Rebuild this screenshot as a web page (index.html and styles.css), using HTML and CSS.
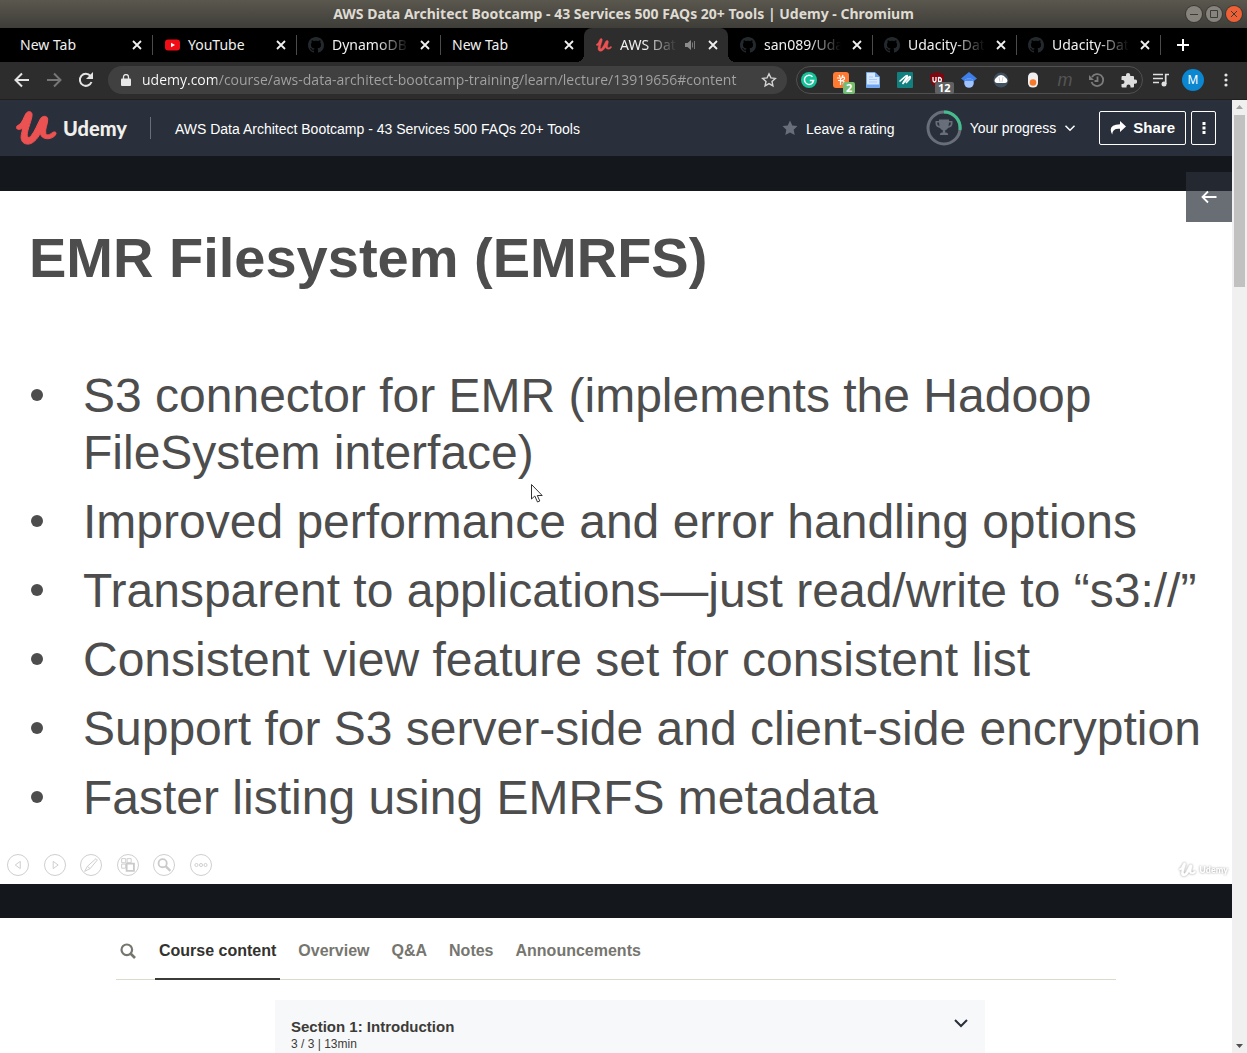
FILE: index.html
```html
<!DOCTYPE html>
<html lang="en">
<head>
<meta charset="utf-8">
<title>AWS Data Architect Bootcamp - 43 Services 500 FAQs 20+ Tools | Udemy</title>
<link rel="stylesheet" href="styles.css">
</head>
<body>
<svg class="defs" aria-hidden="true">
  <symbol id="close" viewBox="0 0 16 16"><path d="M4 4l8 8M12 4l-8 8" stroke="currentColor" stroke-width="1.800" fill="none"/></symbol>
  <symbol id="github" viewBox="0 0 16 16"><path fill="#24292e" d="M8 0C3.580 0 0 3.580 0 8c0 3.540 2.290 6.530 5.470 7.590.4.070.55-.17.55-.38 0-.19-.01-.82-.01-1.490-2.010.37-2.530-.49-2.690-.94-.09-.23-.48-.94-.82-1.130-.28-.15-.68-.52-.01-.53.63-.01 1.080.58 1.230.82.72 1.210 1.870.87 2.330.66.070-.52.28-.87.51-1.070-1.780-.2-3.640-.89-3.640-3.950 0-.87.31-1.590.82-2.150-.08-.2-.36-1.020.08-2.120 0 0 .67-.21 2.200.82.64-.18 1.320-.27 2-.27s1.360.09 2 .27c1.530-1.040 2.200-.82 2.200-.82.44 1.100.16 1.920.08 2.120.51.56.82 1.270.82 2.150 0 3.070-1.870 3.750-3.650 3.950.29.25.54.73.54 1.480 0 1.070-.01 1.930-.01 2.200 0 .21.15.46.55.38A8.010 8.010 0 0016 8c0-4.420-3.580-8-8-8z"/></symbol>
  <symbol id="umark" viewBox="0 0 42 36"><path fill="currentColor" stroke="currentColor" stroke-width="1" d="M.5 17.500C.5 15.500 2 15.500 4 14C6.500 12 8 7 10 3.500C12 0 16.500 .7 16.500 4.500C16.500 9 11.500 20 11.500 25C11.500 28 13.500 28.500 15.500 26C19.500 21 22 14 25 8.500C26.500 5.500 32.500 4.500 32.500 9.500C32.500 14 29.500 19.500 30.500 23.500C31.500 26.500 35 24.500 37.500 22.500C39.500 21.500 41.500 22 41 24C40 27 36 29 32.500 29C28 29 25.500 27 25 23.500C21.500 30 16.500 35 11.500 34.500C6 34 4.500 29.500 5.500 24.500L7 18C5.500 19.500 .5 20.500 .5 17.500Z"/></symbol>
  <symbol id="chevron" viewBox="0 0 16 16"><path d="M2 5l6 6L14 5" fill="none" stroke="currentColor" stroke-width="2"/></symbol>
</svg>

<header class="titlebar">
  <span class="titlebar-text">AWS Data Architect Bootcamp - 43 Services 500 FAQs 20+ Tools | Udemy - Chromium</span>
  <div class="window-buttons">
    <button class="wbtn" aria-label="Minimize"><svg viewBox="0 0 16 16"><path d="M4 8.500h8"/></svg></button>
    <button class="wbtn" aria-label="Maximize"><svg viewBox="0 0 16 16"><path d="M4.500 4.500h7v7h-7z"/></svg></button>
    <button class="wbtn wbtn-close" aria-label="Close window"><svg viewBox="0 0 16 16"><path d="M5 5l6 6M11 5l-6 6"/></svg></button>
  </div>
</header>

<nav class="tabstrip" aria-label="Browser tabs">
  <div class="tab"><span class="tab-label">New Tab</span><button aria-label="Close tab"><svg><use href="#close"/></svg></button></div>
  <div class="tab"><svg class="favicon" viewBox="0 0 16 16"><rect x="1" y="2.500" width="15" height="11" rx="3" fill="#f00d16"/><path d="M7 5.700L11 8l-4 2.300z" fill="#fff"/></svg><span class="tab-label">YouTube</span><button aria-label="Close tab"><svg><use href="#close"/></svg></button></div>
  <div class="tab"><svg class="favicon"><use href="#github"/></svg><span class="tab-label faded">DynamoDB</span><button aria-label="Close tab"><svg><use href="#close"/></svg></button></div>
  <div class="tab no-rule"><span class="tab-label">New Tab</span><button aria-label="Close tab"><svg><use href="#close"/></svg></button></div>
  <div class="tab active no-rule"><svg class="favicon red"><use href="#umark"/></svg><span class="tab-label faded">AWS Dat</span><svg class="audio" viewBox="0 0 12 12"><path d="M0 4h2.500L6 1v10L2.500 8H0z" fill="#8b8b8b"/><path d="M7.500 3.500v5M9.500 2v8" stroke="#777" fill="none"/></svg><button aria-label="Close tab"><svg><use href="#close"/></svg></button></div>
  <div class="tab"><svg class="favicon"><use href="#github"/></svg><span class="tab-label faded">san089/Uda</span><button aria-label="Close tab"><svg><use href="#close"/></svg></button></div>
  <div class="tab"><svg class="favicon"><use href="#github"/></svg><span class="tab-label faded">Udacity-Dat</span><button aria-label="Close tab"><svg><use href="#close"/></svg></button></div>
  <div class="tab"><svg class="favicon"><use href="#github"/></svg><span class="tab-label faded">Udacity-Dat</span><button aria-label="Close tab"><svg><use href="#close"/></svg></button></div>
  <button class="new-tab" aria-label="New tab"><svg viewBox="0 0 12 12"><path d="M6 0v12M0 6h12" stroke="#fff" stroke-width="2"/></svg></button>
</nav>

<div class="toolbar">
  <button class="tool" aria-label="Back"><svg viewBox="0 0 16 16"><path d="M15 8H2M8 1.500L1.500 8 8 14.500" fill="none" stroke="#e4e4e4" stroke-width="2"/></svg></button>
  <button class="tool" aria-label="Forward"><svg viewBox="0 0 16 16"><path d="M1 8h13M8 1.500L14.500 8 8 14.500" fill="none" stroke="#767676" stroke-width="2"/></svg></button>
  <button class="tool" aria-label="Reload"><svg viewBox="0 0 16 16"><path d="M13.500 10A6 6 0 1 1 12.500 4" fill="none" stroke="#e4e4e4" stroke-width="2"/><path d="M15 0v7H8z" fill="#e4e4e4"/></svg></button>
  <form class="omnibox">
    <svg class="lock" viewBox="0 0 10 12"><path d="M1 4.500h8q1 0 1 1V11q0 1-1 1H1q-1 0-1-1V5.500q0-1 1-1z" fill="#e8e8e8"/><path d="M2.500 5V3a2.500 2.500 0 0 1 5 0v2" fill="none" stroke="#e8e8e8" stroke-width="1.300"/></svg>
    <input aria-label="Address" value="udemy.com/course/aws-data-architect-bootcamp-training/learn/lecture/13919656#content">
    <button type="button" aria-label="Bookmark"><svg viewBox="0 0 16 16"><path d="M8 1.800l1.900 4.100 4.400.5-3.300 3 .9 4.400L8 11.600l-3.900 2.200.9-4.400-3.300-3 4.400-.5z" fill="none" stroke="#d4d4d4" stroke-width="1.400"/></svg></button>
  </form>
  <div class="extensions">
    <button aria-label="Grammarly"><svg viewBox="0 0 16 16"><circle cx="8" cy="8" r="8" fill="#15c39a"/><path d="M11.500 4.800A4.600 4.600 0 1 0 12.600 8.500H8.800M12.600 8.500l-1.400 2.800" fill="none" stroke="#fff" stroke-width="1.500"/></svg></button>
    <button aria-label="Honey"><svg viewBox="0 0 16 16"><rect width="16" height="16" rx="3" fill="#ff7a33"/><path d="M4 6h4M7.500 6v7M5 8.500h3M8 6.500q3-2.500 3.500-.5T8 9q3-.5 3 1t-1.500 2M6 3l1 2M10 3L9 5" fill="none" stroke="#fff" stroke-width="1.200"/></svg><b class="count green">2</b></button>
    <button aria-label="Documents"><svg viewBox="0 0 16 16"><path d="M1.500.5H10L14.500 5v10.500h-13z" fill="#d6e7ff" stroke="#76a8ee"/><path d="M10 .5V5h4.500z" fill="#6aa2ef"/><path d="M4 5h4M4 7.500h8M4 10h8" stroke="#a9cbf9"/><path d="M2 12.500h12V15H2z" fill="#6ea6f4"/></svg></button>
    <button aria-label="Notes"><svg viewBox="0 0 16 16"><rect width="16" height="16" rx="1" fill="#11807f"/><path d="M2.500 9.500L9 4q2-1.500 1 1L6 11M5.500 12L12 5q2-1.500 1 1.500L9 11" stroke="#fff" stroke-width="1.600" fill="none"/></svg></button>
    <button aria-label="uBlock"><svg viewBox="0 0 16 16"><path d="M8 0l6 2q1 0 1 1c0 6-1 10-7 13C2 13 1 9 1 3q0-1 1-1z" fill="#800610"/><path d="M4 5v3q0 2 1.500 2T7 8V5M9.500 5v5M9.500 5.500q4 0 2.500 4H9.500" fill="none" stroke="#fff" stroke-width="1.300"/></svg><b class="count gray">12</b></button>
    <button aria-label="Scholar"><svg viewBox="0 0 16 16"><path d="M8 0l8 6.500-4 3.300H4L0 6.500z" fill="#3f7fe8"/><circle cx="8" cy="11" r="4.800" fill="#a0c3ff"/><path d="M3.500 9a5 5 0 0 1 9 0z" fill="#4c8af5"/></svg></button>
    <button aria-label="Cloud"><svg viewBox="0 0 16 16"><circle cx="8" cy="8" r="7.500" fill="#40505e"/><path d="M1.500 9Q1.500 6.500 3.500 5.500 5 3 8 3t4.500 2.500q2 1 2 3.500-.5 2-2.500 2H4q-2 0-2.500-2z" fill="#fff"/><path d="M6 5l1 5M10 5l-1 5" stroke="#bbb" stroke-width=".7"/></svg></button>
    <button aria-label="Recorder"><svg viewBox="0 0 16 16"><rect x="3" y=".5" width="10" height="15" rx="4.500" fill="#f0eeee"/><circle cx="8" cy="10.500" r="3.300" fill="#f6792b"/></svg></button>
    <button aria-label="Mail" class="m">m</button>
    <button aria-label="History"><svg viewBox="0 0 16 16"><path d="M3 5a6 6 0 1 1-.5 5M8.500 4.500V9h-3" fill="none" stroke="#7b7b7b" stroke-width="1.800"/><path d="M0 3v5h5z" fill="#7b7b7b"/></svg></button>
    <button aria-label="Extensions"><svg viewBox="0 0 16 16"><path d="M1 4h4V3a2 2 0 0 1 4.200 0v1H12q1 0 1 1v2.500h1a2 2 0 0 1 0 4.200h-1V14.500q0 1-1 1H9.500v-1a1.900 1.900 0 0 0-4 0v1H1.500q-1 0-1-1V12h1a1.900 1.900 0 0 0 0-4h-1V5z" fill="#dedede"/></svg></button>
  </div>
  <button class="tool end" aria-label="Media controls"><svg viewBox="0 0 16 16"><path d="M0 2.500h10M0 6.500h10M0 10.500h6" stroke="#e0e0e0" stroke-width="1.700"/><path d="M12.700 12V2.500H16" fill="none" stroke="#e0e0e0" stroke-width="1.700"/><circle cx="11" cy="12" r="2.500" fill="#e0e0e0"/></svg></button>
  <button class="avatar" aria-label="Profile">M</button>
  <button class="tool end" aria-label="Browser menu"><svg viewBox="0 0 16 16" fill="#e4e4e4"><circle cx="8" cy="3" r="1.600"/><circle cx="8" cy="8" r="1.600"/><circle cx="8" cy="13" r="1.600"/></svg></button>
</div>

<div class="viewport">
  <div class="page">
    <header class="course-header">
      <a class="brand" href="#" aria-label="Udemy home"><svg viewBox="0 0 42 36"><use href="#umark"/></svg><span>Udemy</span></a>
      <a class="course-title" href="#">AWS Data Architect Bootcamp - 43 Services 500 FAQs 20+ Tools</a>
      <button class="rating"><svg viewBox="0 0 16 16"><path d="M8 .5l2.300 4.900 5.200.7-3.800 3.600 1 5.300L8 12.400 3.300 15l1-5.300L.5 6.100l5.200-.7z" fill="#686f7a"/></svg>Leave a rating</button>
      <button class="progress">
        <svg class="ring" viewBox="0 0 36 36"><circle cx="18" cy="18" r="16" fill="none" stroke="#686f7a" stroke-width="3"/><path d="M18 2a16 16 0 0 1 16 18" fill="none" stroke="#44bd8c" stroke-width="3"/><path d="M13 9.500h10V11h3.500v2.500q0 3.500-4.500 4.500-1 2-2.800 2.300v2.200h1q2 0 2 2.500h-8.400q0-2.500 2-2.500h1v-2.200Q15 20 14 18q-4.500-1-4.500-4.500V11H13zM11 12.500q0 3 2.500 3.800L13 12.500zM25 12.500h-2l-.5 3.800q2.500-.8 2.500-3.800z" fill="#686f7a" fill-rule="evenodd"/></svg>
        Your progress
        <svg class="chev"><use href="#chevron"/></svg>
      </button>
      <button class="outlined share"><svg viewBox="0 0 16 14"><path d="M10 0l6 5.500L10 11V7.800Q2.500 7 2.200 13.500-3 4 10 3.300z" fill="#fff"/></svg>Share</button>
      <button class="outlined more" aria-label="More options"><svg viewBox="0 0 4 14" fill="#fff"><path d="M.5 1h3v3h-3zM.5 5.500h3v3h-3zM.5 10h3v3h-3z"/></svg></button>
    </header>

    <main>
      <section class="player">
        <button class="expand" aria-label="Show course content"><svg viewBox="0 0 16 14"><path d="M15.500 7H1.500M7 1.500L1.500 7 7 12.500" fill="none" stroke="#fff" stroke-width="1.800"/></svg></button>
        <div class="slide">
          <h1>EMR Filesystem (EMRFS)</h1>
          <ul>
            <li>S3 connector for EMR (implements the Hadoop<br>FileSystem interface)</li>
            <li>Improved performance and error handling options</li>
            <li>Transparent to applications—just read/write to “s3://”</li>
            <li>Consistent view feature set for consistent list</li>
            <li>Support for S3 server-side and client-side encryption</li>
            <li>Faster listing using EMRFS metadata</li>
          </ul>
          <svg class="cursor" viewBox="0 0 12 19"><path d="M.5.500v14.500l3.300-3 2.700 6 2.300-1-2.500-5.500h4.900z" fill="#fff" stroke="#333"/></svg>
          <footer class="slide-footer">
            <div class="slide-controls">
              <button aria-label="Previous slide"><svg viewBox="0 0 22 22"><path d="M13.500 7v8L8 11z"/></svg></button>
              <button aria-label="Next slide"><svg viewBox="0 0 22 22"><path d="M9 7v8l5.500-4z"/></svg></button>
              <button aria-label="Pen"><svg viewBox="0 0 22 22"><path d="M4 18l3-5.500L16.500 4l1.500 1.500L10 15zM7 12.500L10 15"/></svg></button>
              <button aria-label="All slides"><svg viewBox="0 0 22 22"><path d="M4 4h4.500v4.500H4zM10 4h4.500v4.500H10zM4 10h4.500v4.500H4z"/><path d="M9.500 9.500h8v8h-8z" stroke-width="2" fill="#fff"/></svg></button>
              <button aria-label="Zoom"><svg viewBox="0 0 22 22"><circle cx="9.500" cy="9" r="4.500" stroke-width="2"/><path d="M13 12.500l5 5" stroke-width="2.500"/></svg></button>
              <button aria-label="More"><svg viewBox="0 0 22 22"><circle cx="6" cy="11" r="1.700"/><circle cx="11" cy="11" r="1.700"/><circle cx="16" cy="11" r="1.700"/></svg></button>
            </div>
            <div class="watermark"><svg viewBox="0 0 42 36"><use href="#umark"/></svg><span>Udemy</span></div>
          </footer>
        </div>
      </section>

      <section class="details">
        <nav class="detail-tabs" aria-label="Course sections">
          <button class="search" aria-label="Search"><svg viewBox="0 0 16 16"><circle cx="6.800" cy="6.800" r="5.300" fill="none" stroke="#76766f" stroke-width="2.200"/><path d="M10.500 10.500l4.500 4.500" stroke="#76766f" stroke-width="2.600"/></svg></button>
          <a class="current" href="#">Course content</a>
          <a href="#">Overview</a>
          <a href="#">Q&amp;A</a>
          <a href="#">Notes</a>
          <a href="#">Announcements</a>
        </nav>
        <button class="section-card">
          <span><strong>Section 1: Introduction</strong><small>3 / 3 | 13min</small></span>
          <svg><use href="#chevron"/></svg>
        </button>
      </section>
    </main>
  </div>
  <div class="scrollbar" aria-hidden="true">
    <svg viewBox="0 0 15 15"><path d="M4 9l3.500-4L11 9z" fill="#a3a3a3"/></svg>
    <div class="thumb"></div>
    <svg class="down" viewBox="0 0 15 15"><path d="M4 6l3.500 4L11 6z" fill="#505050"/></svg>
  </div>
</div>
</body>
</html>
```
FILE: styles.css
```css
* { box-sizing: border-box; }

body {
  margin: 0;
  height: 100vh;
  overflow: hidden;
  display: flex;
  flex-direction: column;
  background: #fff;
  font-family: "Liberation Sans", Arial, sans-serif;
}

button {
  margin: 0;
  padding: 0;
  border: 0;
  background: none;
  color: inherit;
  font: inherit;
}

a { color: inherit; text-decoration: none; }
svg { display: block; flex: none; }
.defs { position: absolute; width: 0; height: 0; }

/* Window frame */
.titlebar, .tabstrip, .toolbar {
  flex: none;
  display: flex;
  align-items: center;
  font-family: "Noto Sans", sans-serif;
}

.titlebar {
  height: 28px;
  position: relative;
  justify-content: center;
  padding-bottom: 2px;
  background: linear-gradient(#5a574e, #3e3d38);
  color: #dfdbd2;
  font-size: 14px;
  font-weight: 700;
}

.window-buttons {
  position: absolute;
  right: 5px;
  top: 6px;
  display: flex;
  gap: 4px;
}

.wbtn {
  width: 16px;
  height: 16px;
  border-radius: 8px;
  background: #86847c;
  box-shadow: 0 0 0 1px #3a3935;
}
.wbtn svg { width: 16px; height: 16px; fill: none; stroke: #3c3b37; }
.wbtn-close { background: #ee6035; }

.tabstrip {
  height: 34px;
  padding-left: 8px;
  background: #000;
  color: #f0f0f0;
  font-size: 14px;
}

.tab {
  position: relative;
  flex: 0 1 144px;
  min-width: 0;
  height: 34px;
  padding: 0 7px 0 12px;
  display: flex;
  align-items: center;
  gap: 8px;
}
.tab::after {
  content: "";
  position: absolute;
  right: -1px;
  top: 7px;
  width: 1px;
  height: 20px;
  background: #4b4b4b;
}
.no-rule::after { display: none; }
.tab svg { width: 16px; height: 16px; }
.tab .red { color: #ec5252; }
.tab .audio { width: 12px; height: 12px; }
.tab-label {
  flex: 1;
  min-width: 0;
  padding-bottom: 2px;
  white-space: nowrap;
}
.faded { mask-image: linear-gradient(to left, transparent, #000 32px); }
.active { background: #2d2d2d; border-radius: 8px 8px 0 0; }
.active::before {
  content: "";
  position: absolute;
  left: -8px;
  right: -8px;
  bottom: 0;
  height: 8px;
  background:
    radial-gradient(circle at 0 0, transparent 8px, #2d2d2d 8px) left / 8px 8px no-repeat,
    radial-gradient(circle at 8px 0, transparent 8px, #2d2d2d 8px) right / 8px 8px no-repeat;
}
.new-tab { margin-left: 17px; }
.new-tab svg { width: 12px; height: 12px; }

.toolbar {
  height: 38px;
  padding: 0 5px 2px 6px;
  background: #2d2d2d;
  border-bottom: 1px solid #1f1f1f;
}
.tool { width: 32px; height: 28px; display: grid; place-items: center; }
.tool svg { width: 16px; height: 16px; }

.omnibox {
  flex: 1;
  height: 28px;
  margin: 0 9px 0 6px;
  padding: 0 10px 0 13px;
  display: flex;
  align-items: center;
  gap: 11px;
  border-radius: 14px;
  background: #404040;
}
.omnibox .lock { width: 10px; height: 12px; }
.omnibox input {
  flex: 1;
  min-width: 0;
  padding: 0;
  border: 0;
  outline: 0;
  font: 14px "Open Sans", sans-serif;
  color: transparent;
  background: linear-gradient(to right, #fff 75px, #a3a3a3 75px);
  background-clip: text;
  -webkit-background-clip: text;
}
.omnibox button svg { width: 16px; height: 16px; }

.extensions {
  height: 28px;
  padding: 0 5px 0 4px;
  display: flex;
  align-items: center;
  gap: 16px;
  border: 1px solid #505050;
  border-radius: 14px;
}
.extensions button { position: relative; width: 16px; height: 16px; }
.extensions .m { color: #555; font: italic 18px/14px "Liberation Sans", sans-serif; }
.count {
  position: absolute;
  left: 10px;
  top: 10px;
  padding: 0 3px;
  border-radius: 2px;
  color: #fff;
  font-size: 11px;
  line-height: 12px;
}
.green { background: #76bd74; }
.gray { left: 6px; background: #5f6163; }
.end { margin-left: 2px; }
.avatar {
  width: 22px;
  height: 22px;
  margin: 0 4px 0 5px;
  border-radius: 11px;
  background: #0b86d0;
  color: #fff;
  font-size: 12px;
}

/* Page area */
.viewport { flex: 1; min-height: 0; display: flex; }
.page { flex: 1; min-width: 0; overflow: hidden; }

.scrollbar {
  flex: none;
  width: 15px;
  display: flex;
  flex-direction: column;
  background: #f0f0f0;
}
.scrollbar svg { width: 15px; height: 15px; }
.thumb { height: 172px; margin: 0 2px; background: #c1c1c1; }
.down { margin-top: auto; }

.course-header {
  height: 56px;
  padding: 0 16px;
  display: flex;
  align-items: center;
  background: #29303b;
  color: #fff;
  font-size: 15px;
}
.brand {
  display: flex;
  align-items: center;
  gap: 6px;
  padding-right: 24px;
  color: #ec5252;
  background: linear-gradient(#686f7a, #686f7a) right center / 1px 22px no-repeat;
}
.brand svg { width: 41px; height: 36px; }
.brand span {
  color: #f0efeb;
  font: 900 20px/32px Lato, sans-serif;
}
.course-title { margin: 0 auto 0 24px; padding-top: 2px; font-size: 14px; }
.rating, .progress { display: flex; align-items: center; gap: 8px; font-size: 14px; }
.rating { padding-top: 2px; }
.rating svg { width: 16px; height: 16px; margin-bottom: 3px; }
.progress { margin: 0 23px 0 31px; }
.ring { width: 36px; height: 36px; }
.chev { width: 12px; height: 12px; }
.outlined {
  height: 34px;
  border: 1px solid #fff;
  border-radius: 2px;
  display: flex;
  align-items: center;
  justify-content: center;
  gap: 7px;
  padding-bottom: 1px;
  font-weight: 700;
}
.share { padding: 0 10px 1px; }
.share svg { width: 16px; height: 14px; }
.more { width: 25px; margin-left: 5px; }
.more svg { width: 4px; height: 14px; }

.player {
  position: relative;
  padding: 35px 0 34px;
  background: #14171c;
}
.expand {
  position: absolute;
  z-index: 1;
  right: 0;
  top: 16px;
  width: 46px;
  height: 50px;
  display: grid;
  place-items: center;
  background: rgba(41, 48, 59, .7);
}
.expand svg { width: 16px; height: 14px; }

.slide {
  position: relative;
  padding: 35px 4px 7px 29px;
  background: #fff;
  color: #4d4d4d;
}
.slide h1 { margin: 0; font-size: 56px; line-height: 64px; }
.slide ul {
  margin: 77px 0 0;
  padding: 0;
  display: grid;
  gap: 12px;
  list-style: none;
  font-size: 48px;
  line-height: 57px;
}
.slide li { display: grid; grid-template-columns: 54px 1fr; white-space: nowrap; }
.slide li::before {
  content: "";
  width: 12px;
  height: 12px;
  margin: 22px 0 0 2px;
  border-radius: 6px;
  background: #4d4d4d;
}
.cursor { position: absolute; left: 531px; top: 293px; width: 12px; height: 19px; }

.slide-footer {
  margin: 27px 0 0 -22px;
  display: flex;
  align-items: center;
  justify-content: space-between;
}
.slide-controls { width: 205px; display: flex; justify-content: space-between; }
.slide-controls button {
  width: 22px;
  height: 22px;
  border: 1px solid #cfcfcf;
  border-radius: 11px;
}
.slide-controls svg { width: 20px; height: 20px; fill: none; stroke: #cacaca; }
.watermark {
  display: flex;
  align-items: center;
  gap: 3px;
  padding-top: 9px;
  color: #fff;
  filter: drop-shadow(0 0 1px #999);
}
.watermark svg { width: 17px; height: 15px; }
.watermark span { font: 900 9px/14px Lato, sans-serif; }

.details { max-width: 1000px; margin: 0 auto; }
.detail-tabs {
  height: 62px;
  padding-left: 4px;
  display: flex;
  gap: 14px;
  border-bottom: 1px solid #dcdacb;
  color: #76766f;
  font-size: 16px;
  font-weight: 700;
}
.search { margin-right: 5px; }
.search svg { width: 16px; height: 16px; margin-bottom: -4px; }
.detail-tabs a { height: 62px; padding: 0 4px; line-height: 66px; }
.detail-tabs .current { color: #33322e; border-bottom: 2px solid #3c3b37; }

.section-card {
  width: 71%;
  height: 80px;
  margin: 20px 0 0 159px;
  padding: 15px 16px;
  display: flex;
  align-items: flex-start;
  justify-content: space-between;
  background: #f7f8fa;
  color: #3c3b37;
  text-align: left;
}
.section-card strong { display: block; font-size: 15px; line-height: 24px; }
.section-card small { display: block; font-size: 12px; line-height: 11px; }
.section-card svg { width: 16px; height: 16px; color: #29303b; }
```
